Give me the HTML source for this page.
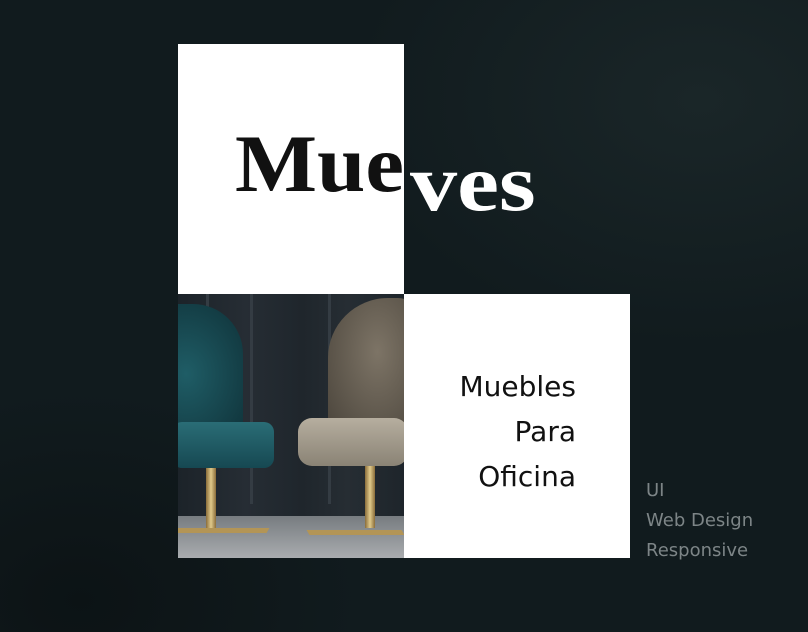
<!DOCTYPE html>
<html><head><meta charset="utf-8"><style>
*{margin:0;padding:0;box-sizing:border-box}
body{width:808px;height:632px;overflow:hidden;position:relative;
background:radial-gradient(ellipse 500px 350px at 700px 100px,#1a2628 0%,transparent 70%),
radial-gradient(ellipse 400px 300px at 80px 600px,#0c1315 0%,transparent 70%),#111b1e;}
.abs{position:absolute}
.w1{left:178px;top:44px;width:226px;height:250px;background:#fff}
.w2{left:404px;top:294px;width:226px;height:264px;background:#fff}
.photo{left:178px;top:294px;width:226px;height:264px;overflow:hidden;
background:linear-gradient(90deg,#1c2329 0%,#262d34 30%,#1f262c 55%,#262d33 75%,#1e252b 100%)}
.serif{font-family:"Liberation Serif","DejaVu Serif",serif;font-weight:bold;font-size:82px;line-height:1;transform-origin:0 0}
.sans{font-family:"DejaVu Sans","Liberation Sans",sans-serif}
.r{right:232px;text-align:right;font-size:28px;color:#111;line-height:1}
.g{left:646px;font-size:18px;color:#7d8587;line-height:1}
</style></head><body>
<div class="abs w1"></div>
<div class="abs w2"></div>
<div class="abs photo">
 <div class="abs" style="left:28px;top:0;width:3px;height:225px;background:#343c43"></div>
 <div class="abs" style="left:72px;top:0;width:3px;height:210px;background:#343c43"></div>
 <div class="abs" style="left:150px;top:0;width:3px;height:210px;background:#343c43"></div>
 <div class="abs" style="left:0;top:222px;width:226px;height:42px;background:linear-gradient(#777c80,#a9acaf)"></div>
 <!-- teal chair -->
 <div class="abs" style="left:-30px;top:10px;width:95px;height:140px;border-radius:30px 50px 10px 10px;background:radial-gradient(ellipse at 40% 50%,#1f5d66,#0f3138)"></div>
 <div class="abs" style="left:-6px;top:128px;width:102px;height:46px;border-radius:10px;background:linear-gradient(#2a6d76,#164852)"></div>
 <div class="abs" style="left:28px;top:174px;width:10px;height:60px;background:linear-gradient(90deg,#8a6d3a,#e0c98a,#8a6d3a)"></div>
 <div class="abs" style="left:-5px;top:234px;width:95px;height:5px;background:#b39556;transform:skewX(-30deg)"></div>
 <!-- beige chair -->
 <div class="abs" style="left:150px;top:4px;width:90px;height:135px;border-radius:60px 20px 10px 10px;background:radial-gradient(ellipse at 55% 40%,#7d7466,#4a443b)"></div>
 <div class="abs" style="left:120px;top:124px;width:110px;height:48px;border-radius:14px;background:linear-gradient(#b6ae9f,#8a8375)"></div>
 <div class="abs" style="left:187px;top:172px;width:10px;height:62px;background:linear-gradient(90deg,#8a6d3a,#e0c98a,#8a6d3a)"></div>
 <div class="abs" style="left:130px;top:236px;width:95px;height:5px;background:#b39556;transform:skewX(30deg)"></div>
</div>
<div class="abs serif" style="left:235px;top:123px;color:#111;transform:scaleX(1.06)">Mue</div>
<div class="abs serif" style="left:410px;top:142px;color:#fff;transform:scaleX(1.15)">ves</div>
<div class="abs sans r" style="top:373px;">Muebles</div>
<div class="abs sans r" style="top:418px;">Para</div>
<div class="abs sans r" style="top:463px;">Oficina</div>
<div class="abs sans g" style="top:482px;">UI</div>
<div class="abs sans g" style="top:512px;">Web Design</div>
<div class="abs sans g" style="top:542px;">Responsive</div>
</body></html>
